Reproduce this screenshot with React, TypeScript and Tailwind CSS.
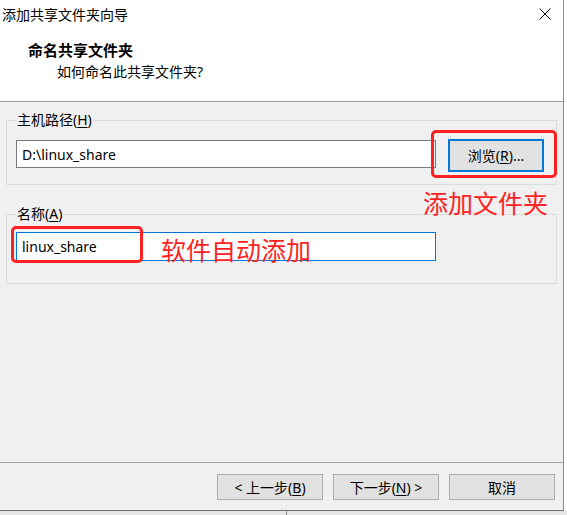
import React from "react";

const font = {
  fontFamily: '"Noto Sans", "Noto Sans CJK SC", sans-serif',
};

const U = ({ c }: { c: string }) => <span className="underline underline-offset-2">{c}</span>;

const WinButton = ({ children, focus = false }: { children: React.ReactNode; focus?: boolean }) => (
  <button
    className={
      "flex items-center justify-center bg-[#e1e1e1] text-[14px] text-black " +
      (focus ? "border-2 border-[#0078d7]" : "border border-[#adadad]")
    }
  >
    {children}
  </button>
);

const App = () => {
  return (
    <div className="relative w-[567px] h-[515px] overflow-hidden bg-white text-black" style={font}>
      <div className="w-[564px] h-[511px] flex flex-col bg-[#f0f0f0] border-r border-b border-r-[#8c8c8c] border-b-[#6d6d6d]">
        {/* header */}
        <div className="h-[102px] bg-white border-b border-[#a0a0a0]">
          <div className="h-[30px] flex items-center justify-between pl-[2px] pr-[12px]">
            <span className="text-[14px] leading-[18px]">添加共享文件夹向导</span>
            <svg width="12" height="12" viewBox="0 0 12 12" className="mt-[-2px]">
              <path d="M0.5 0.5 L11.5 11.5 M11.5 0.5 L0.5 11.5" stroke="#000" strokeWidth="1" />
            </svg>
          </div>
          <div className="pl-[28px] mt-[10px] text-[15px] leading-[20px] font-bold">命名共享文件夹</div>
          <div className="pl-[57px] mt-[2px] text-[14px] leading-[20px]">如何命名此共享文件夹?</div>
        </div>

        {/* body */}
        <div className="h-[360px] px-[6px] pt-[9px]">
          <fieldset className="border border-[#dcdcdc] px-[9px] pt-[10px] pb-[12px] w-[551px]">
            <legend className="px-[1px] text-[14px] leading-[18px]">
              主机路径(<U c="H" />)
            </legend>
            <div className="flex items-start gap-[12px]">
              <div className="mt-[1px] w-[420px] h-[28px] bg-white border border-[#7a7a7a] flex items-center pl-[5px] text-[14px]">
                D:\linux_share
              </div>
              <div className="w-[96px] h-[33px] flex">
                <WinButton focus>
                  <span className="w-[92px]">
                    浏览(<U c="R" />)...
                  </span>
                </WinButton>
              </div>
            </div>
          </fieldset>

          <fieldset className="mt-[20px] border border-[#dcdcdc] px-[9px] pt-[9px] pb-[22px] w-[551px]">
            <legend className="px-[1px] text-[14px] leading-[18px]">
              名称(<U c="A" />)
            </legend>
            <div className="w-[420px] h-[29px] bg-white border border-[#0078d7] flex items-center pl-[5px] text-[14px]">
              linux_share
            </div>
          </fieldset>
        </div>

        {/* footer */}
        <div className="h-[48px] border-t border-[#a0a0a0] flex justify-end gap-[10px] pt-[11px] pr-[8px]">
          <div className="w-[106px] h-[26px] flex [&>button]:w-full">
            <WinButton>
              &lt; 上一步(<U c="B" />)
            </WinButton>
          </div>
          <div className="w-[106px] h-[26px] flex [&>button]:w-full">
            <WinButton>
              下一步(<U c="N" />) &gt;
            </WinButton>
          </div>
          <div className="w-[106px] h-[26px] flex [&>button]:w-full">
            <WinButton>取消</WinButton>
          </div>
        </div>
      </div>
      <div className="h-[4px] flex bg-[#e6e6e6]">
        <div className="w-[287px] border-r border-[#808080]" />
      </div>

      {/* annotations */}
      <div className="absolute left-[431px] top-[130px] w-[126px] h-[48px] border-[3px] border-[#ff2222] rounded-[5px]" />
      <div className="absolute left-[11px] top-[226px] w-[132px] h-[37px] border-[3px] border-[#ff2222] rounded-[5px]" />
      <div className="absolute left-[423px] top-[189px] text-[25px] leading-[28px] text-[#ff2222] whitespace-nowrap">
        添加文件夹
      </div>
      <div className="absolute left-[161px] top-[236px] text-[25px] leading-[28px] text-[#ff2222] whitespace-nowrap">
        软件自动添加
      </div>
    </div>
  );
};

export default App;
